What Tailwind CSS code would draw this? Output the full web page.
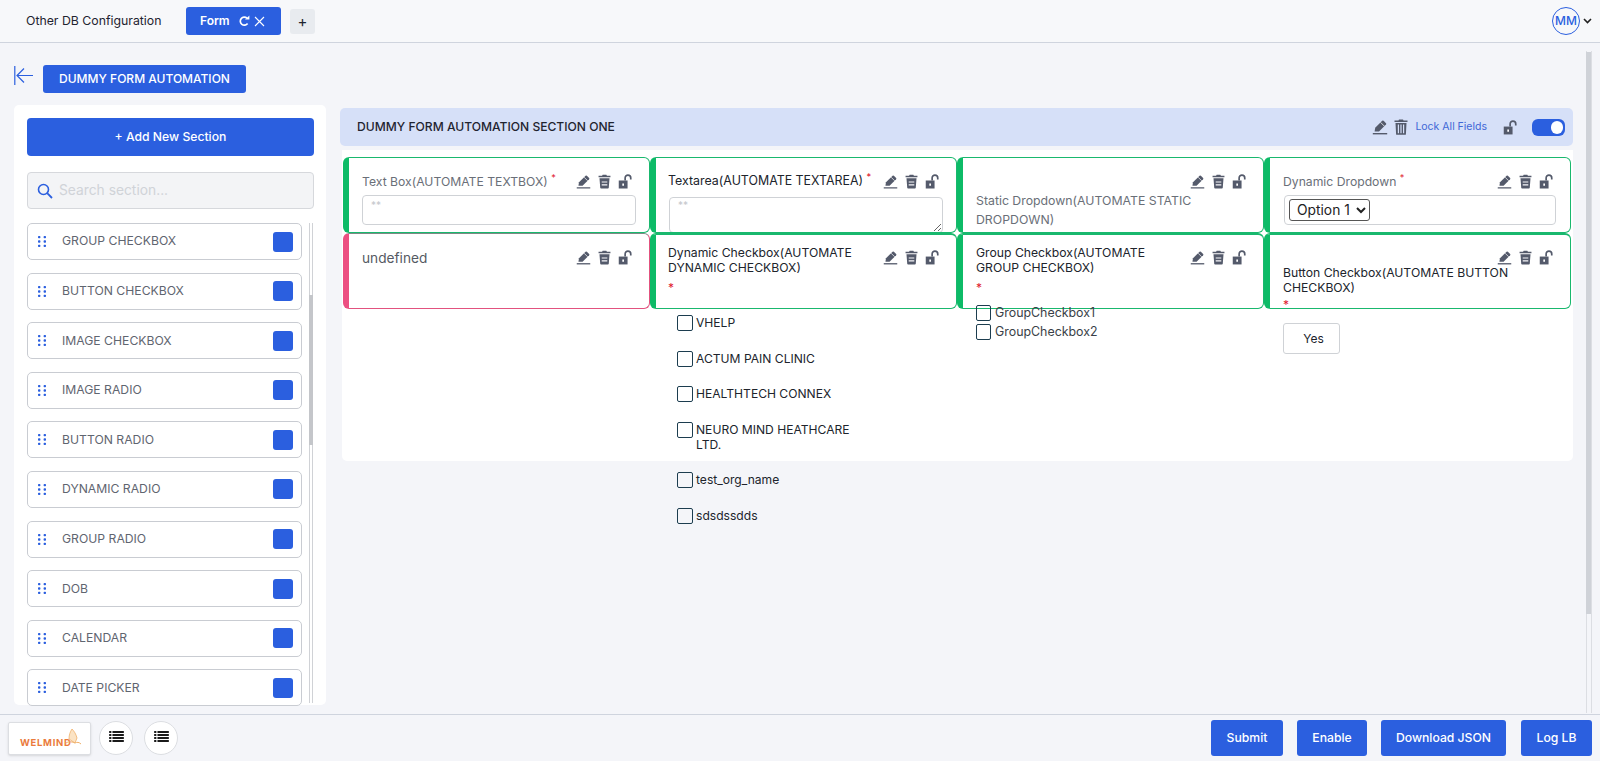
<!DOCTYPE html>
<html lang="en">
<head>
  <meta charset="UTF-8" />
  <title>Form</title>
  <script src="https://cdn.jsdelivr.net/npm/@tailwindcss/browser@4"></script>
</head>
<body class="font-['Inter',sans-serif] bg-[#f4f5f9] text-[#1f2430] h-[761px] overflow-hidden">
  <svg class="hidden">
    <symbol id="pen" viewBox="0 0 16 16"><path fill="currentColor" d="M2.6 12.4 3.2 8.7 10.2 1.8Q10.9 1.2 11.6 1.8L14 4.2Q14.6 4.9 14 5.6L7 12.4z"/><path fill="none" stroke="#f7f8fb" stroke-width=".8" d="M8.6 3.4l3.8 3.8"/><path fill="currentColor" d="M0.8 14h14.4v1.4H0.8z"/></symbol>
    <symbol id="trash" viewBox="0 0 14 16"><path fill="currentColor" d="M5 .6h4l.6 1.3H13.4v1.6H.6V1.9H4.4zM1.6 4.6h10.8l-.8 10.1c0 .4-.4.8-.9.8H3.3c-.5 0-.9-.4-.9-.8z"/><path fill="#f7f8fb" d="M4 8h6v1.2H4zM4 11h6v1.2H4z"/></symbol>
    <symbol id="unlock" viewBox="0 0 16 16"><path fill="currentColor" d="M.8 7h9.4v8.4H.8z"/><path fill="#fff" d="M4.6 10h1.8v2.6H4.6z"/><path fill="none" stroke="currentColor" stroke-width="1.8" d="M7.6 7V4.2a3 3 0 0 1 6 0v1.6"/></symbol>
    <symbol id="trash2" viewBox="0 0 14 16"><path fill="currentColor" d="M5 .4h4l.5 1.2h4v1.5H.5V1.6h4zM1.5 4h11l-.6 11.2c0 .3-.3.6-.7.6H2.8c-.4 0-.7-.3-.7-.6zM3.8 5.6v8.6h1.2V5.6zm2.6 0v8.6h1.2V5.6zm2.6 0v8.6h1.2V5.6z"/></symbol>
    <symbol id="grip" viewBox="0 0 10 14"><g fill="currentColor"><rect x="0" y="0" width="3" height="3" rx="1"/><rect x="7" y="0" width="3" height="3" rx="1"/><rect x="0" y="5.5" width="3" height="3" rx="1"/><rect x="7" y="5.5" width="3" height="3" rx="1"/><rect x="0" y="11" width="3" height="3" rx="1"/><rect x="7" y="11" width="3" height="3" rx="1"/></g></symbol>
    <symbol id="list" viewBox="0 0 16 12"><path fill="currentColor" d="M0 0h2.4v2.2H0zM3.6 0H16v2.2H3.6zM0 3.3h2.4v2.2H0zM3.6 3.3H16v2.2H3.6zM0 6.6h2.4v2.2H0zM3.6 6.6H16v2.2H3.6zM0 9.8h2.4V12H0zM3.6 9.8H16V12H3.6z"/></symbol>
  </svg>

  <!-- top bar -->
  <header class="h-[43px] border-b border-[#cfd4de] bg-[#f7f8fa] flex items-center pl-[26px] pr-[8px]">
    <span class="text-[12.3px] mr-[24px] w-[136px] whitespace-nowrap">Other DB Configuration</span>
    <div class="w-[95px] h-[28px] bg-[#2b5fdf] text-white rounded-[3px] flex items-center pl-[14px] text-[12px] font-semibold">
      Form
      <svg class="w-[12px] h-[12px] ml-[8px]" viewBox="0 0 12 12"><path fill="none" stroke="currentColor" stroke-width="1.7" d="M9.6 8.4A4 4 0 1 1 9 3.2"/><path fill="currentColor" d="M7 4.6h4.4V.6z"/></svg>
      <svg class="w-[11px] h-[11px] ml-[4px]" viewBox="0 0 11 11"><path stroke="currentColor" stroke-width="1.1" d="M1 1l9 9M10 1l-9 9"/></svg>
    </div>
    <div class="w-[25px] h-[25px] ml-[9px] bg-[#e8ebef] rounded-[3px] flex items-center justify-center text-[15px] leading-none">+</div>
    <div class="ml-auto flex items-center gap-[3px]">
      <div class="w-[28px] h-[28px] rounded-full border border-[#2b5fdf] text-[#2b5fdf] flex items-center justify-center text-[12px] font-medium">MM</div>
      <svg class="w-[9px] h-[6px]" viewBox="0 0 9 6"><path fill="none" stroke="#222" stroke-width="1.6" d="M1 1l3.5 3.5L8 1"/></svg>
    </div>
  </header>

  <div class="h-[671px] overflow-hidden relative">
    <!-- page scrollbar -->
    <div class="absolute right-[8px] top-[8px] w-[6px] h-[662px] border-x border-[#dcdee3]"></div>
    <div class="absolute right-[9px] top-[9px] w-[5px] h-[562px] bg-[#cfd2d8]"></div>

    <div class="flex items-start pl-[14px] pt-[22px] gap-[10px] h-[62px]">
      <svg class="w-[19px] h-[19px] mt-[1px] text-[#2b5fdf]" viewBox="0 0 19 19"><path fill="none" stroke="currentColor" stroke-width="1.2" d="M.8 0v19M19 9.5H3M10 2.5l-7 7 7 7"/></svg>
      <button class="h-[28px] w-[203px] bg-[#2b5fdf] text-white text-[12px] font-medium rounded-[3px]">DUMMY FORM AUTOMATION</button>
    </div>

    <div class="flex items-start pl-[14px]">
      <!-- sidebar -->
      <aside class="w-[312px] h-[600px] bg-white rounded-[5px] px-[13px] pt-[13px] shrink-0">
        <button class="w-[287px] h-[38px] bg-[#2b5fdf] text-white text-[12.2px] font-medium rounded-[4px]">+ Add New Section</button>
        <div class="w-[287px] h-[37px] mt-[16px] bg-[#f3f4f6] border border-[#d6d8dc] rounded-[4px] flex items-center pl-[9px] gap-[6px]">
          <svg class="w-[16px] h-[16px] text-[#2b5fdf]" viewBox="0 0 16 16"><circle cx="6.5" cy="6.5" r="5" fill="none" stroke="currentColor" stroke-width="1.6"/><path stroke="currentColor" stroke-width="1.8" d="M10.2 10.2 15 15"/></svg>
          <span class="text-[13.8px] text-[#d0d3d8]">Search section...</span>
        </div>
        <div class="flex mt-[14px]">
          <ul class="w-[276px] flex flex-col gap-[12.6px]">
            <li class="h-[37px] bg-white border border-[#c9ccd2] rounded-[5px] flex items-center pl-[10px] pr-[8px] text-[#5f6570] text-[12.2px]"><svg class="w-[8px] h-[13px] text-[#2b5fdf]"><use href="#grip"/></svg><span class="ml-[16px]">GROUP CHECKBOX</span><span class="ml-auto w-[20px] h-[20px] bg-[#2b5fdf] rounded-[3px]"></span></li>
            <li class="h-[37px] bg-white border border-[#c9ccd2] rounded-[5px] flex items-center pl-[10px] pr-[8px] text-[#5f6570] text-[12.2px]"><svg class="w-[8px] h-[13px] text-[#2b5fdf]"><use href="#grip"/></svg><span class="ml-[16px]">BUTTON CHECKBOX</span><span class="ml-auto w-[20px] h-[20px] bg-[#2b5fdf] rounded-[3px]"></span></li>
            <li class="h-[37px] bg-white border border-[#c9ccd2] rounded-[5px] flex items-center pl-[10px] pr-[8px] text-[#5f6570] text-[12.2px]"><svg class="w-[8px] h-[13px] text-[#2b5fdf]"><use href="#grip"/></svg><span class="ml-[16px]">IMAGE CHECKBOX</span><span class="ml-auto w-[20px] h-[20px] bg-[#2b5fdf] rounded-[3px]"></span></li>
            <li class="h-[37px] bg-white border border-[#c9ccd2] rounded-[5px] flex items-center pl-[10px] pr-[8px] text-[#5f6570] text-[12.2px]"><svg class="w-[8px] h-[13px] text-[#2b5fdf]"><use href="#grip"/></svg><span class="ml-[16px]">IMAGE RADIO</span><span class="ml-auto w-[20px] h-[20px] bg-[#2b5fdf] rounded-[3px]"></span></li>
            <li class="h-[37px] bg-white border border-[#c9ccd2] rounded-[5px] flex items-center pl-[10px] pr-[8px] text-[#5f6570] text-[12.2px]"><svg class="w-[8px] h-[13px] text-[#2b5fdf]"><use href="#grip"/></svg><span class="ml-[16px]">BUTTON RADIO</span><span class="ml-auto w-[20px] h-[20px] bg-[#2b5fdf] rounded-[3px]"></span></li>
            <li class="h-[37px] bg-white border border-[#c9ccd2] rounded-[5px] flex items-center pl-[10px] pr-[8px] text-[#5f6570] text-[12.2px]"><svg class="w-[8px] h-[13px] text-[#2b5fdf]"><use href="#grip"/></svg><span class="ml-[16px]">DYNAMIC RADIO</span><span class="ml-auto w-[20px] h-[20px] bg-[#2b5fdf] rounded-[3px]"></span></li>
            <li class="h-[37px] bg-white border border-[#c9ccd2] rounded-[5px] flex items-center pl-[10px] pr-[8px] text-[#5f6570] text-[12.2px]"><svg class="w-[8px] h-[13px] text-[#2b5fdf]"><use href="#grip"/></svg><span class="ml-[16px]">GROUP RADIO</span><span class="ml-auto w-[20px] h-[20px] bg-[#2b5fdf] rounded-[3px]"></span></li>
            <li class="h-[37px] bg-white border border-[#c9ccd2] rounded-[5px] flex items-center pl-[10px] pr-[8px] text-[#5f6570] text-[12.2px]"><svg class="w-[8px] h-[13px] text-[#2b5fdf]"><use href="#grip"/></svg><span class="ml-[16px]">DOB</span><span class="ml-auto w-[20px] h-[20px] bg-[#2b5fdf] rounded-[3px]"></span></li>
            <li class="h-[37px] bg-white border border-[#c9ccd2] rounded-[5px] flex items-center pl-[10px] pr-[8px] text-[#5f6570] text-[12.2px]"><svg class="w-[8px] h-[13px] text-[#2b5fdf]"><use href="#grip"/></svg><span class="ml-[16px]">CALENDAR</span><span class="ml-auto w-[20px] h-[20px] bg-[#2b5fdf] rounded-[3px]"></span></li>
            <li class="h-[37px] bg-white border border-[#c9ccd2] rounded-[5px] flex items-center pl-[10px] pr-[8px] text-[#5f6570] text-[12.2px]"><svg class="w-[8px] h-[13px] text-[#2b5fdf]"><use href="#grip"/></svg><span class="ml-[16px]">DATE PICKER</span><span class="ml-auto w-[20px] h-[20px] bg-[#2b5fdf] rounded-[3px]"></span></li>
          </ul>
          <div class="ml-[7px] w-[4px] h-[480px] border-x border-[#d0d2d6] relative">
            <div class="absolute left-[-1px] top-[72px] w-[4px] h-[150px] bg-[#c4c6ca]"></div>
          </div>
        </div>
      </aside>

      <!-- main -->
      <main class="w-[1233px] ml-[14px] mt-[3px] shrink-0">
        <div class="h-[38px] bg-[#d6e0f8] rounded-[5px] flex items-center pl-[17px] pr-[8px] text-[#1f2430]">
          <span class="text-[12.1px] font-medium">DUMMY FORM AUTOMATION SECTION ONE</span>
          <svg class="w-[16px] h-[16px] ml-auto text-[#545a6b]"><use href="#pen"/></svg>
          <svg class="w-[14px] h-[16px] ml-[6px] text-[#545a6b]"><use href="#trash2"/></svg>
          <span class="text-[10.5px] text-[#3f67d6] ml-[7px]">Lock All Fields</span>
          <svg class="w-[15px] h-[15px] ml-[16px] text-[#545a6b]"><use href="#unlock"/></svg>
          <span class="w-[33px] h-[17px] ml-[14px] bg-[#2b5fdf] rounded-[6px] flex items-center justify-end pr-[2px]"><span class="w-[12px] h-[13px] bg-white rounded-full"></span></span>
        </div>

        <div class="bg-white mt-[4px] ml-[2px] h-[311px] rounded-b-[5px] pl-[1px] pt-[7px]">
          <div class="grid grid-cols-[307px_307px_307px_307px]">
            <!-- row 1 -->
            <div class="relative h-[76px] bg-white border border-[#19b86e] border-l-[6px] border-l-[#0dbb67] rounded-[6px] pl-[13px] pt-[14px] overflow-hidden">
              <div class="absolute right-[16px] top-[16px] flex items-center gap-[7px] text-[#545a6b]"><svg class="w-[15px] h-[15px]"><use href="#pen"/></svg><svg class="w-[13px] h-[15px]"><use href="#trash"/></svg><svg class="w-[15px] h-[15px]"><use href="#unlock"/></svg></div>
              <div class="text-[12.2px] text-[#6a6f78] leading-[20px]">Text Box(AUTOMATE TEXTBOX) <sup class="text-[#e0202e]">*</sup></div>
              <div class="w-[274px] h-[30px] mt-[3px] border border-[#cfd2d6] rounded-[4px] pl-[8px] pt-[2px] text-[10px] text-[#c4c7cc] leading-[14px]">**</div>
            </div>
            <div class="relative h-[76px] bg-white border border-[#19b86e] border-l-[6px] border-l-[#0dbb67] rounded-[6px] pl-[12px] pt-[13px] overflow-hidden">
              <div class="absolute right-[16px] top-[16px] flex items-center gap-[7px] text-[#545a6b]"><svg class="w-[15px] h-[15px]"><use href="#pen"/></svg><svg class="w-[13px] h-[15px]"><use href="#trash"/></svg><svg class="w-[15px] h-[15px]"><use href="#unlock"/></svg></div>
              <div class="text-[12.4px] text-[#20242c] leading-[20px]">Textarea(AUTOMATE TEXTAREA) <sup class="text-[#e0202e]">*</sup></div>
              <textarea class="block w-[274px] h-[36px] mt-[6px] ml-[1px] border border-[#cfd2d6] rounded-[4px] pl-[8px] text-[10px] placeholder:text-[#c4c7cc]" placeholder="**"></textarea>
            </div>
            <div class="relative h-[76px] bg-white border border-[#19b86e] border-l-[6px] border-l-[#0dbb67] rounded-[6px] pl-[13px] pt-[33px] overflow-hidden">
              <div class="absolute right-[16px] top-[16px] flex items-center gap-[7px] text-[#545a6b]"><svg class="w-[15px] h-[15px]"><use href="#pen"/></svg><svg class="w-[13px] h-[15px]"><use href="#trash"/></svg><svg class="w-[15px] h-[15px]"><use href="#unlock"/></svg></div>
              <div class="w-[240px] text-[12.3px] text-[#6a6f78] leading-[19px]">Static Dropdown(AUTOMATE STATIC DROPDOWN)</div>
            </div>
            <div class="relative h-[76px] bg-white border border-[#19b86e] border-l-[6px] border-l-[#0dbb67] rounded-[6px] pl-[13px] pt-[14px] overflow-hidden">
              <div class="absolute right-[16px] top-[16px] flex items-center gap-[7px] text-[#545a6b]"><svg class="w-[15px] h-[15px]"><use href="#pen"/></svg><svg class="w-[13px] h-[15px]"><use href="#trash"/></svg><svg class="w-[15px] h-[15px]"><use href="#unlock"/></svg></div>
              <div class="text-[12.2px] text-[#6a6f78] leading-[20px]">Dynamic Dropdown <sup class="text-[#e0202e]">*</sup></div>
              <div class="w-[272px] h-[30px] mt-[3px] ml-[1px] border border-[#cfd2d6] rounded-[4px] pl-[4px] flex items-center">
                <select class="w-[81px] h-[22px] border border-[#555] rounded-[3px] text-[13.8px] pl-[3px] text-[#222]"><option>Option 1</option></select>
              </div>
            </div>

            <!-- row 2 -->
            <div class="relative h-[76px] bg-white border border-[#e2527f] border-l-[6px] border-l-[#ec4f82] border-t-[#7d8a86] rounded-[6px] pl-[13px] pt-[14px]">
              <div class="absolute right-[16px] top-[16px] flex items-center gap-[7px] text-[#545a6b]"><svg class="w-[15px] h-[15px]"><use href="#pen"/></svg><svg class="w-[13px] h-[15px]"><use href="#trash"/></svg><svg class="w-[15px] h-[15px]"><use href="#unlock"/></svg></div>
              <div class="text-[13.7px] text-[#555a63] leading-[20px]">undefined</div>
            </div>
            <div class="relative h-[76px] bg-white border border-[#19b86e] border-t-2 border-l-[6px] border-l-[#0dbb67] rounded-[6px] pl-[12px] pt-[10px]">
              <div class="absolute right-[16px] top-[15px] flex items-center gap-[7px] text-[#545a6b]"><svg class="w-[15px] h-[15px]"><use href="#pen"/></svg><svg class="w-[13px] h-[15px]"><use href="#trash"/></svg><svg class="w-[15px] h-[15px]"><use href="#unlock"/></svg></div>
              <div class="w-[205px] text-[12.2px] text-[#20242c] leading-[15px]">Dynamic Checkbox(AUTOMATE DYNAMIC CHECKBOX)</div>
              <div class="text-[12px] text-[#e0202e] leading-[20px] mt-[3px]">*</div>
            </div>
            <div class="relative h-[76px] bg-white border border-[#19b86e] border-t-2 border-l-[6px] border-l-[#0dbb67] rounded-[6px] pl-[13px] pt-[10px]">
              <div class="absolute right-[16px] top-[15px] flex items-center gap-[7px] text-[#545a6b]"><svg class="w-[15px] h-[15px]"><use href="#pen"/></svg><svg class="w-[13px] h-[15px]"><use href="#trash"/></svg><svg class="w-[15px] h-[15px]"><use href="#unlock"/></svg></div>
              <div class="w-[205px] text-[12.2px] text-[#20242c] leading-[15px]">Group Checkbox(AUTOMATE GROUP CHECKBOX)</div>
              <div class="text-[12px] text-[#e0202e] leading-[20px] mt-[3px]">*</div>
            </div>
            <div class="relative h-[76px] bg-white border border-[#19b86e] border-t-2 border-l-[6px] border-l-[#0dbb67] rounded-[6px] pl-[13px] pt-[30px]">
              <div class="absolute right-[16px] top-[15px] flex items-center gap-[7px] text-[#545a6b]"><svg class="w-[15px] h-[15px]"><use href="#pen"/></svg><svg class="w-[13px] h-[15px]"><use href="#trash"/></svg><svg class="w-[15px] h-[15px]"><use href="#unlock"/></svg></div>
              <div class="w-[240px] text-[12.2px] text-[#20242c] leading-[15px]">Button Checkbox(AUTOMATE BUTTON CHECKBOX)</div>
              <div class="text-[12px] text-[#e0202e] leading-[20px]">*</div>
            </div>

            <!-- options under row 2 -->
            <div></div>
            <div class="pl-[27px] pt-[6px] text-[12.1px] text-[#20242c] leading-[15px]">
              <label class="flex items-start gap-[3px] h-[36px]"><span class="w-[16px] h-[16px] border border-[#1c3d4f] rounded-[2px] shrink-0"></span>VHELP</label>
              <label class="flex items-start gap-[3px] h-[35px]"><span class="w-[16px] h-[16px] border border-[#1c3d4f] rounded-[2px] shrink-0"></span>ACTUM PAIN CLINIC</label>
              <label class="flex items-start gap-[3px] h-[36px]"><span class="w-[16px] h-[16px] border border-[#1c3d4f] rounded-[2px] shrink-0"></span>HEALTHTECH CONNEX</label>
              <label class="flex items-start gap-[3px] h-[50px] w-[190px]"><span class="w-[16px] h-[16px] border border-[#1c3d4f] rounded-[2px] shrink-0"></span>NEURO MIND HEATHCARE LTD.</label>
              <label class="flex items-start gap-[3px] h-[36px]"><span class="w-[16px] h-[16px] border border-[#1c3d4f] rounded-[2px] shrink-0"></span>test_org_name</label>
              <label class="flex items-start gap-[3px] h-[35px]"><span class="w-[16px] h-[16px] border border-[#1c3d4f] rounded-[2px] shrink-0"></span>sdsdssdds</label>
            </div>
            <div class="pl-[19px] mt-[-4px] relative text-[12.4px] text-[#3a3f48] leading-[15px]">
              <label class="flex items-start gap-[4px] h-[19px]"><span class="w-[15px] h-[16px] border border-[#1c3d4f] rounded-[2px] shrink-0"></span>GroupCheckbox1</label>
              <label class="flex items-start gap-[4px] h-[19px]"><span class="w-[15px] h-[16px] border border-[#1c3d4f] rounded-[2px] shrink-0"></span>GroupCheckbox2</label>
            </div>
            <div class="pl-[19px] pt-[14px]">
              <button class="w-[57px] h-[31px] border border-[#cfd2d6] rounded-[3px] text-[12px] text-[#20242c] pl-[4px]">Yes</button>
            </div>
          </div>
        </div>
      </main>
    </div>
  </div>

  <!-- footer -->
  <footer class="h-[47px] border-t border-[#cfd4de] bg-[#f4f5f9] flex items-center pl-[8px] pr-[8px] relative">
    <div class="w-[83px] h-[33px] bg-white border border-[#dcdee2] rounded-[2px] shadow-sm relative flex items-end pl-[11px] pb-[5px]">
      <span class="text-[9.5px] font-bold text-[#ea7b3c] tracking-[0.7px] leading-[12px]">WELMIND</span>
      <svg class="absolute right-[8px] top-[5px] w-[17px] h-[20px]" viewBox="0 0 17 20"><path fill="#fbe3c4" stroke="#f0b06a" stroke-width=".8" d="M7 1c2 2 4 5 5 9l-2 5c-2-1-4-3-6-4 0-4 1-7 3-10z"/><path fill="none" stroke="#f0b06a" stroke-width="1" d="M1 15c3-2 7-1 9 0 2-1 4-1 6 1"/></svg>
    </div>
    <div class="w-[34px] h-[34px] ml-[8px] bg-white border border-[#dcdee2] rounded-full flex items-center justify-center"><svg class="w-[15px] h-[11px] text-[#1a1a1a] mt-[-3px]"><use href="#list"/></svg></div>
    <div class="w-[34px] h-[34px] ml-[11px] bg-white border border-[#dcdee2] rounded-full flex items-center justify-center"><svg class="w-[15px] h-[11px] text-[#1a1a1a] mt-[-3px]"><use href="#list"/></svg></div>
    <div class="ml-auto flex gap-[14px] text-[12.2px] font-medium text-white">
      <button class="w-[72px] h-[36px] bg-[#2b5fdf] rounded-[3px]">Submit</button>
      <button class="w-[70px] h-[36px] bg-[#2b5fdf] rounded-[3px]">Enable</button>
      <button class="w-[125px] h-[36px] bg-[#2b5fdf] rounded-[3px]">Download JSON</button>
      <button class="w-[71px] h-[36px] ml-[1px] bg-[#2b5fdf] rounded-[3px]">Log LB</button>
    </div>
  </footer>
</body>
</html>
